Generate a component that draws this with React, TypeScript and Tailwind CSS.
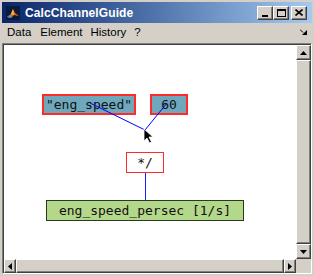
import React from "react";

function ArrowUp() {
  return (
    <svg width="7" height="4" viewBox="0 0 7 4"><path d="M3.5 0 L7 4 L0 4 Z" fill="#000" /></svg>
  );
}
function ArrowDown() {
  return (
    <svg width="7" height="4" viewBox="0 0 7 4"><path d="M0 0 L7 0 L3.5 4 Z" fill="#000" /></svg>
  );
}
function ArrowLeft() {
  return (
    <svg width="4" height="7" viewBox="0 0 4 7"><path d="M4 0 L4 7 L0 3.5 Z" fill="#000" /></svg>
  );
}
function ArrowRight() {
  return (
    <svg width="4" height="7" viewBox="0 0 4 7"><path d="M0 0 L0 7 L4 3.5 Z" fill="#000" /></svg>
  );
}

const raised =
  "bg-[#d4d0c8] border border-t-[#ffffff] border-l-[#ffffff] border-r-[#404040] border-b-[#404040] shadow-[inset_-1px_-1px_0_#808080,inset_1px_1px_0_#d4d0c8]";

const mono = { fontFamily: '"DejaVu Sans Mono", monospace' };

export default function App() {
  return (
    <div
      className="w-[314px] h-[276px] bg-[#d4d0c8] flex flex-col overflow-hidden"
      style={{ fontFamily: '"Liberation Sans", Arial, sans-serif' }}
    >
      {/* Title bar */}
      <div className="h-[21px] mx-[2px] mt-[2px] flex items-center bg-gradient-to-r from-[#0a246a] to-[#a6caf0] pl-[3px] pr-[5px]">
        <svg width="16" height="16" viewBox="0 0 16 16" className="shrink-0">
          <rect x="1" y="1" width="14" height="14" fill="#0b1a3a" />
          <path d="M2 12 L6 9 L8 4 L10 8 L14 11 L9 10 L6 13 Z" fill="#e8681a" />
          <path d="M6 9 L8 4 L9 10 Z" fill="#f6c13a" />
          <path d="M2 12 L6 9 L6 13 Z" fill="#3c8fd6" />
        </svg>
        <span className="ml-[4px] text-white text-[12px] font-bold leading-none tracking-[0.1px]">
          CalcChannelGuide
        </span>
        <div className="ml-auto flex items-center">
          <div className={`${raised} w-[16px] h-[14px] flex items-end justify-center pb-[2px]`}>
            <div className="w-[6px] h-[2px] bg-black" />
          </div>
          <div className={`${raised} w-[16px] h-[14px] flex items-center justify-center`}>
            <div className="w-[9px] h-[8px] border border-black border-t-2" />
          </div>
          <div className={`${raised} ml-[2px] w-[16px] h-[14px] flex items-center justify-center`}>
            <svg width="8" height="7" viewBox="0 0 8 7">
              <path d="M0.5 0.5 L7.5 6.5 M7.5 0.5 L0.5 6.5" stroke="#000" strokeWidth="1.6" />
            </svg>
          </div>
        </div>
      </div>

      {/* Menu bar */}
      <div className="h-[19px] mx-[2px] flex items-center text-[11.5px] text-black leading-none">
        <span className="ml-[5px]">Data</span>
        <span className="ml-[9px]">Element</span>
        <span className="ml-[8px]">History</span>
        <span className="ml-[8px]">?</span>
        <svg width="8" height="7" viewBox="0 0 8 7" className="ml-auto mr-[4px]">
          <path d="M0 0.5 L3 3.5" stroke="#000" strokeWidth="1" />
          <path d="M2 6 L7 6 L7 1 Z" fill="#000" />
        </svg>
      </div>

      {/* Client area */}
      <div className="mx-[2px] mt-[1px] flex-1 flex flex-col border-t border-l border-t-[#808080] border-l-[#808080] border-r border-r-[#ffffff] border-b border-b-[#ffffff]">
        <div className="flex-1 flex min-h-0 border-t border-l border-t-[#404040] border-l-[#404040]">
          {/* Canvas */}
          <div className="relative flex-1 bg-white overflow-hidden">
            {/* eng_speed */}
            <div
              className="absolute left-[38px] top-[49px] w-[94px] h-[21px] bg-[#6fa7bd] border-2 border-[#ff2a2a] flex items-center justify-center text-[13px] text-[#111] leading-none"
              style={mono}
            >
              "eng_speed"
            </div>
            {/* 60 */}
            <div
              className="absolute left-[146px] top-[49px] w-[38px] h-[21px] bg-[#6fa7bd] border-2 border-[#ff2a2a] flex items-center justify-center text-[13px] text-[#111] leading-none"
              style={mono}
            >
              60
            </div>
            {/* */ }
            <div
              className="absolute left-[122px] top-[107px] w-[38px] h-[21px] bg-white border border-[#ff2a2a] flex items-center justify-center text-[13px] text-[#111] leading-none"
              style={mono}
            >
              */
            </div>
            {/* output */}
            <div
              className="absolute left-[42px] top-[155px] w-[198px] h-[21px] bg-[#b4d88a] border border-[#2a3a20] flex items-center justify-center text-[13px] text-[#111] leading-none"
              style={mono}
            >
              eng_speed_persec [1/s]
            </div>
            {/* connections over boxes */}
            <svg className="absolute left-0 top-0" width="300" height="230">
              <line x1="86" y1="58" x2="141" y2="85" stroke="#0000ff" strokeWidth="1" />
              <line x1="163" y1="58" x2="141" y2="85" stroke="#0000ff" strokeWidth="1" />
              <rect x="141" y="128" width="1" height="27" fill="#1a1aff" shapeRendering="crispEdges" />
              {/* cursor */}
              <path
                d="M140 84 L140 96 L143 93 L145.5 98 L147.5 97 L145 92 L149 92 Z"
                fill="#000"
                stroke="#fff"
                strokeWidth="0.8"
              />
            </svg>
          </div>
          {/* Vertical scrollbar */}
          <div className="w-[15px] flex flex-col bg-[#d4d0c8]">
            <div className={`${raised} h-[15px] flex items-center justify-center`}>
              <ArrowUp />
            </div>
            <div className={`${raised} flex-1`} />
            <div className={`${raised} h-[15px] flex items-center justify-center`}>
              <ArrowDown />
            </div>
          </div>
        </div>
        {/* Horizontal scrollbar row */}
        <div className="h-[14px] flex border-l border-l-[#404040]">
          <div className="flex-1 flex">
            <div className={`${raised} w-[12px] flex items-center justify-center`}>
              <ArrowLeft />
            </div>
            <div className={`${raised} flex-1`} />
            <div className={`${raised} w-[12px] flex items-center justify-center`}>
              <ArrowRight />
            </div>
          </div>
          <div className="w-[15px] bg-[#d4d0c8]" />
        </div>
      </div>
      <div className="h-[2px]" />
    </div>
  );
}
